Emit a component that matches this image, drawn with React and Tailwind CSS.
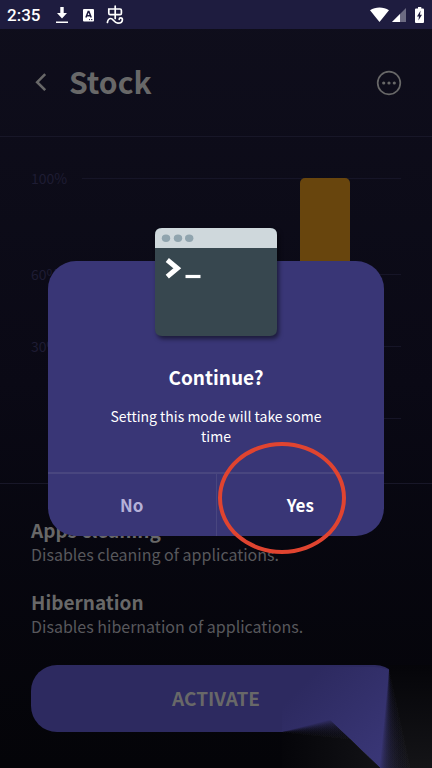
import { useState } from "react";

// =========================
// DATA
// =========================
const levels = [
  { label: "100%", height: "h-24" },
  { label: "60%", height: "h-18" },
  { label: "30%", height: "h-18" },
  { label: "", height: "h-14" }
];

const modes = [
  {
    title: "Apps cleaning",
    text: "Disables cleaning of applications."
  },
  {
    title: "Hibernation",
    text: "Disables hibernation of applications."
  }
];

// =========================
// STATUS BAR
// =========================
const StatusBar = () => (

  <div className="flex h-[29px] items-center justify-between bg-[#1e1c3f] pl-[7px] pr-2 text-white">

    <div className="flex items-center">

      <span className="w-[48px] font-['Roboto',sans-serif] text-[17px] font-medium leading-5">
        2:35
      </span>

      {/* DOWNLOAD */}
      <svg width="14" height="18" viewBox="0 0 14 18" fill="currentColor">
        <path d="M5.3 1h3.4v6H12l-5 5.6L2 7h3.3zM1 15.4h12v1.5H1z" />
      </svg>

      {/* LANGUAGE CARD */}
      <svg className="ml-[13px]" width="12" height="14" viewBox="0 0 12 14">
        <rect x="1" y="1" width="11" height="12.6" rx="1" fill="currentColor" />
        <path d="M3.9 9.6 6.2 3.6h.7l2.3 6M4.8 7.7h3.5" fill="none" stroke="#1e1c3f" strokeWidth="1.5" />
        <path d="M7 11.6h1M9 11.6h1.4" stroke="#1e1c3f" strokeWidth="1" />
      </svg>

      {/* INPUT METHOD */}
      <svg className="ml-3" width="18" height="20" viewBox="0 0 18 20" fill="none" stroke="currentColor" strokeWidth="1.7" strokeLinecap="round">
        <path d="M9.200 1.200v12.300M3.800 4h10.200q1.400 0 1.400 1.400v2.800q0 1.400-1.400 1.400H4.200q-1.400 0-1.400-1.400V4z" />
        <path d="M1.400 17.500c.4-2.600 1.800-4 3.400-4 2.500 0 3.400 4.600 7 4.600 2.600 0 4.600-1.400 4.600-3.400 0-1.200-.8-1.800-1.700-1.800-.9 0-1.500.5-1.500 1.400" />
      </svg>

    </div>

    <div className="flex items-center">

      {/* WIFI */}
      <svg width="19" height="16" viewBox="0 0 19 16" fill="currentColor">
        <path d="M0 3.200C5.500-.4 13.500-.4 19 3.200L9.500 15z" />
      </svg>

      {/* SIGNAL */}
      <svg className="ml-[3px]" width="14" height="14" viewBox="0 0 14 14" fill="currentColor">
        <path d="M14 0v14H0z" opacity=".35" />
        <path d="M8 6v8H0z" />
      </svg>

      {/* BATTERY */}
      <svg className="ml-[9px]" width="9" height="16" viewBox="0 0 9 16">
        <path d="M3 0h3.300v1.600H8q1 0 1 1V15q0 1-1 1H1q-1 0-1-1V2.600q0-1 1-1h2z" fill="currentColor" />
        <path d="M5.600 3.600 2 9.400h2l-.6 4L7 7.800H5z" fill="#1e1c3f" />
      </svg>

    </div>

  </div>

);

// =========================
// TERMINAL PICTURE
// =========================
const TerminalIcon = () => (

  <svg
    className="mx-auto block drop-shadow-[2px_3px_2px_rgba(0,0,0,0.5)]"
    width="122"
    height="108"
    viewBox="0 0 122 108"
  >
    <path d="M7 0h108q7 0 7 7v94q0 7-7 7H7q-7 0-7-7V7q0-7 7-7z" fill="#37474f" />
    <path d="M7 0h108q7 0 7 7v13H0V7q0-7 7-7z" fill="#cfd8dc" />
    <ellipse cx="11" cy="10.300" rx="4.200" ry="3.700" fill="#90a4ae" />
    <ellipse cx="23" cy="10.300" rx="4.200" ry="3.700" fill="#90a4ae" />
    <ellipse cx="34.200" cy="10.300" rx="4.200" ry="3.700" fill="#90a4ae" />
    <path d="m12.300 32 10 8.200-10 8.400" fill="none" stroke="#fff" strokeWidth="5" />
    <path d="M30.500 48.500h15" stroke="#fff" strokeWidth="3.200" />
  </svg>

);

// =========================
// CORNER GLOW
// =========================
const steps = Array.from({ length: 24 }, (_, i) => i);

const CornerGlow = () => (

  <svg
    className="pointer-events-none absolute bottom-0 right-0"
    width="150"
    height="103"
    viewBox="0 0 150 103"
  >

    <defs>
      <linearGradient id="beam" gradientUnits="userSpaceOnUse" x1="20" y1="20" x2="95" y2="95">
        <stop offset="0" stopColor="#2d2a60" />
        <stop offset="1" stopColor="#393676" />
      </linearGradient>
      <linearGradient id="dark" gradientUnits="userSpaceOnUse" x1="0" y1="0" x2="0" y2="103">
        <stop offset="0" stopColor="#050509" />
        <stop offset="1" stopColor="#141417" />
      </linearGradient>
      <linearGradient id="floor" gradientUnits="userSpaceOnUse" x1="0" y1="0" x2="98" y2="0">
        <stop offset="0" stopColor="#050509" />
        <stop offset="1" stopColor="#121216" />
      </linearGradient>
    </defs>

    {/* beam */}
    <path d="M0 2H88q12 0 19 3l30 98H0z" fill="url(#beam)" />

    {/* right shade, fades in from the beam */}
    <path d="M107 0h43v103h-22L107 5z" fill="url(#dark)" />
    {steps.map(i => (
      <path
        key={i}
        d={`M107 5 ${98 + i * 1.3} 103H150V5z`}
        fill="url(#dark)"
        opacity=".12"
      />
    ))}

    {/* lower shade */}
    <path d="M0 67 68 74 98 103H0z" fill="url(#floor)" />
    {steps.map(i => (
      <path
        key={i}
        d={`M0 67 ${48 + i * 0.85} ${55 + i * 0.82}L98 103H0z`}
        fill="url(#floor)"
        opacity=".12"
      />
    ))}

  </svg>

);

// =========================
// DIALOG
// =========================
const ContinueDialog = ({ onClose }) => (

  <div className="absolute inset-x-12 top-[228px]">

    <div
      role="dialog"
      aria-labelledby="dialog-title"
      className="mt-[33px] rounded-[28px] bg-[#393676] text-center text-white"
    >

      <div className="-translate-y-[33px] -mb-[33px]">
        <TerminalIcon />
      </div>

      <h2 id="dialog-title" className="mt-[27px] text-[19px] font-bold leading-7">
        Continue?
      </h2>

      <p className="mx-auto mt-[15px] max-w-[220px] text-sm leading-5">
        Setting this mode will take some time
      </p>

      <div className="mt-[26px] flex border-t-2 border-[#49467f]">

        <button
          onClick={onClose}
          className="h-[62px] flex-1 border-r border-[#49467f] text-[17px] font-bold text-[#b5b1d8]"
        >
          No
        </button>

        <button
          onClick={onClose}
          className="h-[62px] flex-1 text-[17px] font-bold"
        >
          Yes
        </button>

      </div>

    </div>

    {/* HIGHLIGHT RING */}
    <div className="pointer-events-none absolute right-[38px] top-[214px] h-[112px] w-32 rounded-[50%] border-4 border-[#e04430]"></div>

  </div>

);

const App = () => {

  const [open, setOpen] = useState(true);

  return (

    <div className="relative flex min-h-screen flex-col overflow-hidden bg-linear-to-b from-[#0f0e1c] via-[#0a0915] to-[#040408] font-['Noto_Sans_CJK_SC',sans-serif] text-[#686868]">

      <StatusBar />

      {/* HEADER */}
      <header className="flex h-[108px] items-center border-b border-[#181728] pl-[34px] pr-[30px]">

        <button aria-label="Back">
          <svg width="14" height="20" viewBox="0 0 14 20" fill="none" stroke="currentColor" strokeWidth="2.600">
            <path d="m11.200 1.200-8 8 8 8" />
          </svg>
        </button>

        <h1 className="ml-[21px] pb-1 text-[30px] font-bold leading-10">
          Stock
        </h1>

        <button aria-label="More" className="ml-auto">
          <svg width="26" height="26" viewBox="0 0 26 26" fill="currentColor">
            <circle cx="13" cy="13" r="11.300" fill="none" stroke="currentColor" strokeWidth="1.700" />
            <circle cx="7.700" cy="13" r="1.600" />
            <circle cx="13" cy="13" r="1.600" />
            <circle cx="18.300" cy="13" r="1.600" />
          </svg>
        </button>

      </header>

      {/* CHART */}
      <section className="relative border-b border-[#181728] px-[31px] pb-[19px] pt-[31px]">

        {levels.map((level, index) => (

          <div key={index} className={`flex items-start ${level.height}`}>
            <span className="w-[51px] text-sm leading-5 text-[#1e1c33]">
              {level.label}
            </span>
            <div className="mt-[10px] flex-1 border-t border-[#161527]"></div>
          </div>

        ))}

        {/* BAR */}
        <div className="absolute bottom-[66px] right-[82px] top-[41px] w-[50px] rounded-t-[5px] bg-[#68450d]"></div>

      </section>

      {/* MODES */}
      <section className="flex flex-col gap-6 px-[31px] pt-[34px]">

        {modes.map(mode => (

          <div key={mode.title}>
            <h3 className="text-[19px] font-bold leading-6">
              {mode.title}
            </h3>
            <p className="text-base leading-6 text-[#58585c]">
              {mode.text}
            </p>
          </div>

        ))}

      </section>

      <div className="relative px-[31px] pb-9 pt-[27px]">

        <button className="h-[67px] w-full rounded-[26px] bg-[#2d2a60] text-[19px] font-bold">
          ACTIVATE
        </button>

        <CornerGlow />

      </div>

      {open && <ContinueDialog onClose={() => setOpen(false)} />}

    </div>

  );

};

export default App;
